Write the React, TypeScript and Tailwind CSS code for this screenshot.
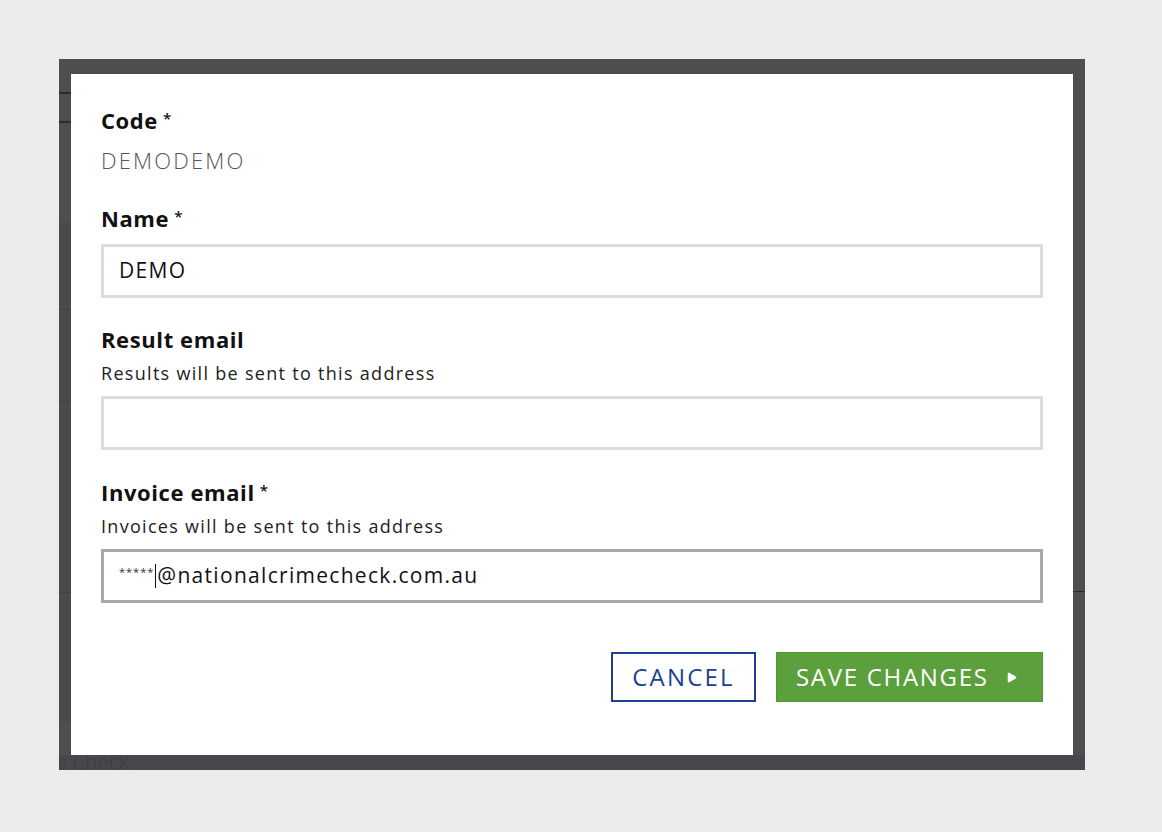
import { Play } from "lucide-react";

const labelCls = "text-[22px] font-bold leading-none tracking-[0.6px] text-[#111]";
const hintCls = "mt-[14px] text-[18px] leading-none tracking-[1.3px] text-[#222]";

function Req() {
  return <span className="relative -top-[5px] ml-[5px] text-[15px] font-semibold leading-none">*</span>;
}

function Field({
  label,
  required,
  hint,
  value,
  focused,
}: {
  label: string;
  required?: boolean;
  hint?: string;
  value?: React.ReactNode;
  focused?: boolean;
}) {
  return (
    <div className="flex flex-col">
      <div className={labelCls}>
        {label}
        {required && <Req />}
      </div>
      {hint && <div className={hintCls}>{hint}</div>}
      <div
        className={
          (hint ? "mt-[14px] " : "mt-[15px] ") +
          "flex h-[54px] items-center border-[3px] bg-white pl-[15px] text-[21px] tracking-[1.3px] text-[#111] " +
          (focused ? "border-[#a8a8a8]" : "border-[#dcdcdc]")
        }
      >
        {value}
      </div>
    </div>
  );
}

export default function App() {
  return (
    <div
      className="min-h-[832px] w-full bg-[#ebebeb] pt-[59px] pl-[59px]"
      style={{ fontFamily: "'Open Sans', Lato, sans-serif" }}
    >
      <div className="relative w-[1026px] overflow-hidden bg-[#4e4e4e] px-[12px] pt-[15px] pb-[15px]">
        {/* page behind the overlay, peeking through the frame */}
        <div className="absolute left-0 top-[33px] h-[2px] w-[12px] bg-[#1d2c4a]" />
        <div className="absolute left-0 top-[62px] h-[2px] w-[12px] bg-[#1d2c4a]" />
        <div className="absolute left-0 top-[163px] h-[500px] w-[12px] bg-[#4a4a4c]" />
        <div className="absolute left-0 top-[250px] h-[1px] w-[12px] bg-[#3e3f44]" />
        <div className="absolute left-0 top-[342px] h-[1px] w-[12px] bg-[#3e3f44]" />
        <div className="absolute left-0 top-[533px] h-[1px] w-[12px] bg-[#3e3f44]" />
        <div className="absolute right-0 top-[532px] h-[1px] w-[12px] bg-[#2a2c34]" />
        <div className="absolute bottom-0 left-0 h-[15px] w-full bg-[#47484c]" />
        <div className="absolute bottom-[-7px] left-[-4px] text-[21px] font-light text-[#3a3c44]">e Check</div>

        <div className="relative flex flex-col bg-white px-[30px] pt-[35px] pb-[53px]">
          <div className={labelCls}>
            Code
            <Req />
          </div>
          <div className="mt-[18px] text-[22px] font-light leading-none tracking-[2.2px] text-[#555]">DEMODEMO</div>

          <div className="mt-[36px]">
            <Field label="Name" required value="DEMO" />
          </div>
          <div className="mt-[30px]">
            <Field label="Result email" hint="Results will be sent to this address" />
          </div>
          <div className="mt-[31px]">
            <Field
              label="Invoice email"
              required
              hint="Invoices will be sent to this address"
              focused
              value={
                <>
                  <span className="mb-[8px] text-[11px] tracking-[1px] text-[#333]">*****</span>
                  <span className="mx-[1px] h-[24px] w-[1px] bg-[#111]" />
                  <span>@nationalcrimecheck.com.au</span>
                </>
              }
            />
          </div>

          <div className="mt-[49px] flex justify-end gap-[20px]">
            <button className="h-[50px] w-[145px] border-[2px] border-[#1c3f94] bg-white text-[24px] tracking-[2.2px] text-[#1c3f94]">
              CANCEL
            </button>
            <button className="flex h-[50px] w-[267px] items-center gap-[16px] border border-[#4e9a2e] bg-[#5ba03c] pl-[19px] text-[24px] tracking-[1.7px] text-white">
              SAVE CHANGES
              <Play className="h-[13px] w-[13px]" fill="white" strokeWidth={0} />
            </button>
          </div>
        </div>
      </div>
    </div>
  );
}
